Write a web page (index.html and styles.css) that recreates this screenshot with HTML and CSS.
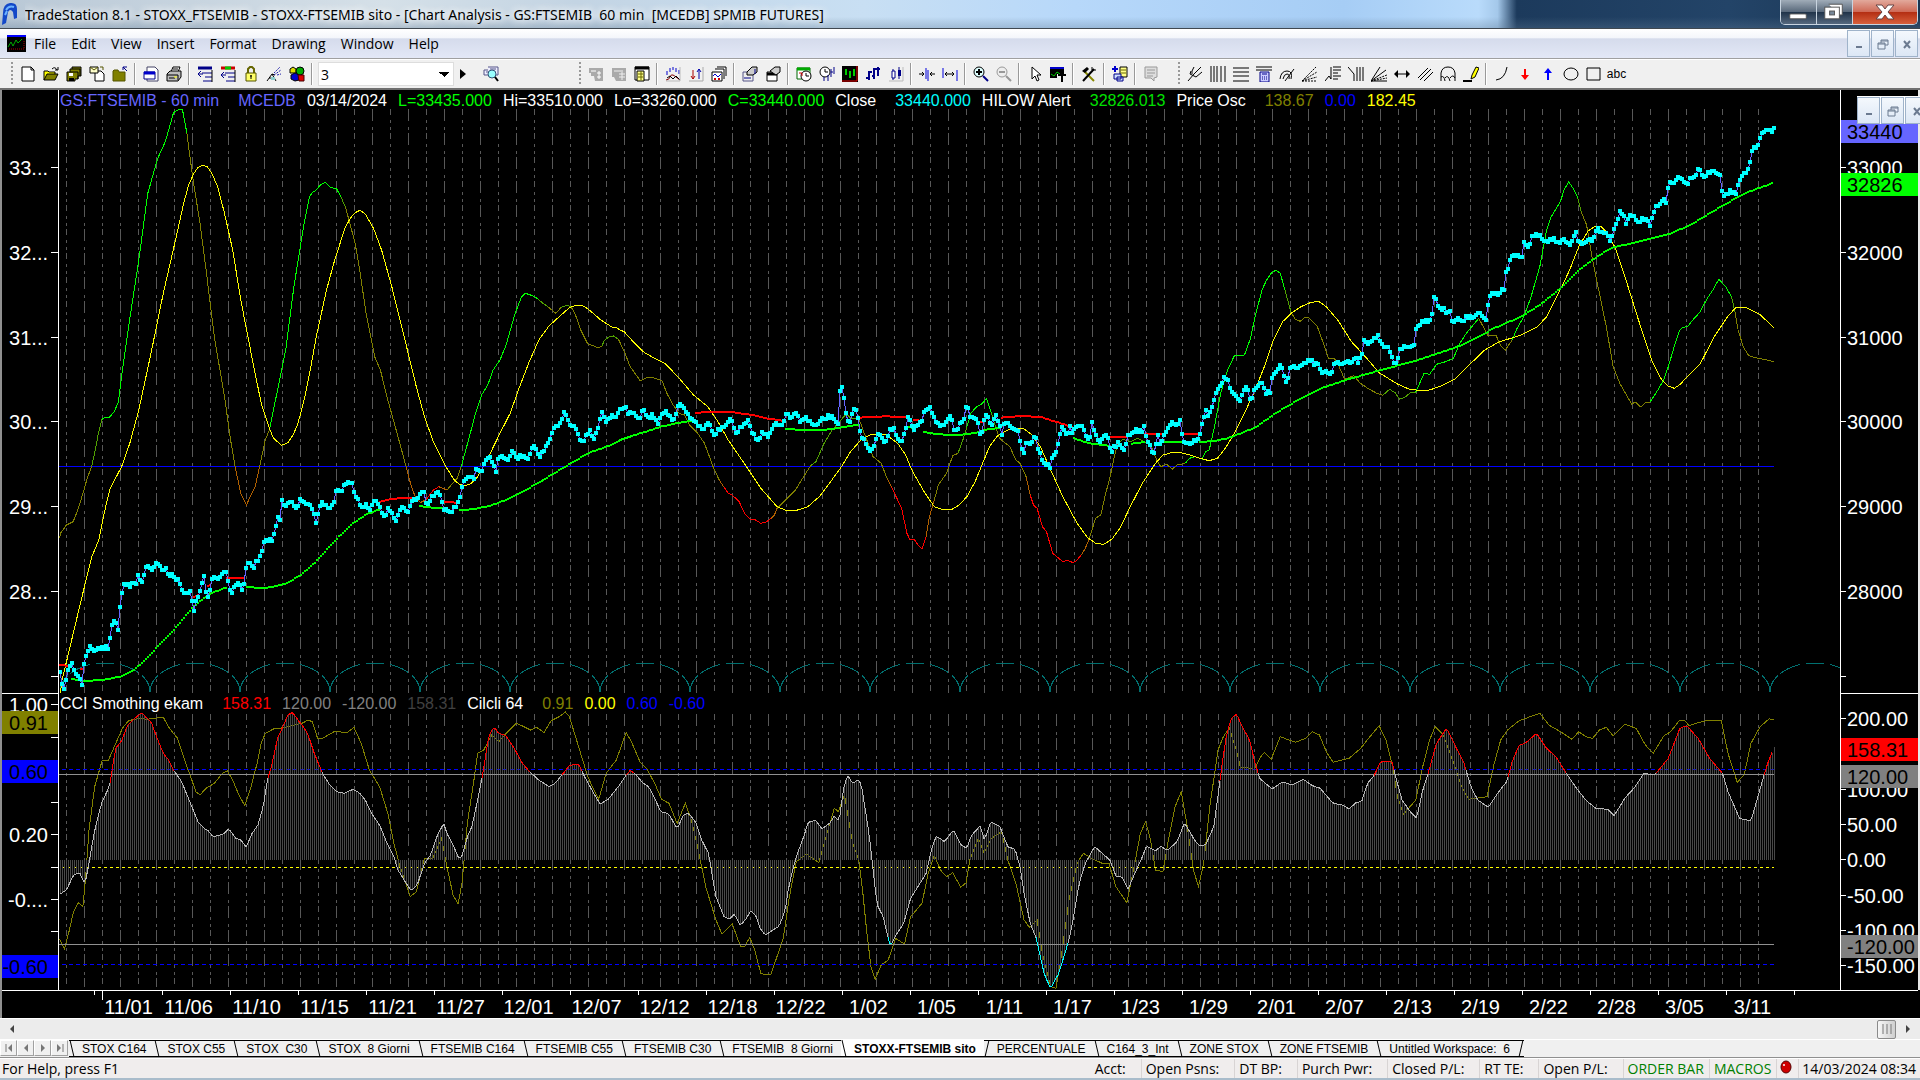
FILE: index.html
```html
<!DOCTYPE html>
<html lang="en">
<head>
<meta charset="utf-8">
<title>TradeStation 8.1</title>
<link rel="stylesheet" href="styles.css">
</head>
<body>
<header class="titlebar">
  <svg class="logo" viewBox="0 0 18 24"><path d="M2 23L3 11Q3 2 10 1Q17 0 17 7L17 16L14 17L13 10Q10 6 8 10L6 21z" fill="#1348c8"/><path d="M6 8Q9 3 14 5M5 13L7 9" stroke="#6db4ff" stroke-width="2" fill="none"/></svg>
  <h1 class="title">TradeStation 8.1 - STOXX_FTSEMIB - STOXX-FTSEMIB sito - [Chart Analysis - GS:FTSEMIB&nbsp; 60 min&nbsp; [MCEDB] SPMIB FUTURES]</h1>
  <div class="winbuttons">
    <button class="win" aria-label="Minimize"><svg viewBox="0 0 36 24"><rect x="9" y="14" width="17" height="5" rx="1" fill="#fff" stroke="#555"/></svg></button>
    <button class="win" aria-label="Restore"><svg viewBox="0 0 36 24"><path d="M12 4h14v11h-3" fill="#fff" stroke="#555"/><rect x="8" y="7" width="15" height="12" fill="#fff" stroke="#555"/><rect x="13" y="11" width="5" height="4" fill="#789" stroke="#555"/></svg></button>
    <button class="win win-close" aria-label="Close"><svg viewBox="0 0 64 24"><path d="M23 5h6l3 4 3-4h6l-6 7 6 7h-6l-3-4-3 4h-6l6-7z" fill="#fff" stroke="#644"/></svg></button>
  </div>
</header>
<nav class="menubar">
  <svg class="menuicon" viewBox="0 0 19 17"><rect width="19" height="17" fill="#000"/><path d="M0 1h19" stroke="#00f" stroke-width="2"/><path d="M1 12l3-5 2 4 3-6 2 3 4-4" stroke="#0a0" fill="none"/><path d="M2 14h15V5" stroke="#a00" fill="none" stroke-dasharray="1 1"/></svg>
  <a href="#">File</a><a href="#">Edit</a><a href="#">View</a><a href="#">Insert</a><a href="#">Format</a><a href="#">Drawing</a><a href="#">Window</a><a href="#">Help</a>
  <div class="mdi">
    <button aria-label="Minimize chart"><svg viewBox="0 0 16 16"><path d="M5 11h6" stroke="#6b7a90" stroke-width="2"/></svg></button>
    <button aria-label="Restore chart"><svg viewBox="0 0 16 16"><path d="M6 7V4h7v5h-3M6 5h7M3 7h7v6H3zM3 8h7" stroke="#6b7a90" fill="none"/></svg></button>
    <button aria-label="Close chart"><svg viewBox="0 0 16 16"><path d="M5 5l6 7M11 5l-6 7" stroke="#6b7a90" stroke-width="2"/></svg></button>
  </div>
</nav>
<div class="toolbar">
  <div class="group">
    <i class="grip"></i>
    <button aria-label="New"><svg viewBox="0 0 16 16"><path d="M2 1h9l3 3v11H2zM11 1v3h3" fill="#fff" stroke="#000"/></svg></button>
    <button aria-label="Open"><svg viewBox="0 0 16 16"><path d="M1 14V5h4l1 1h6v2" fill="#ff0" stroke="#000"/><path d="M1 14l3-6h11l-3 6z" fill="#808000" stroke="#000"/><path d="M9 3q3-3 5 1M12 4h3V1" fill="none" stroke="#000"/></svg></button>
    <button aria-label="Save all"><svg viewBox="0 0 16 16"><path d="M6 1h9v9h-3v3H9v2H1V6h3V3h2z" fill="#808000" stroke="#000"/><path d="M4 6h8v7M6 3h8v7" fill="none" stroke="#000"/><path d="M3 7h4v3H3z" fill="#fff"/><path d="M3 12h5v3H3z" fill="#000"/></svg></button>
    <button aria-label="New from mail"><svg viewBox="0 0 16 16"><path d="M6 5h6l3 3v7H6z" fill="#fff" stroke="#000"/><path d="M1 1h8v6H1z" fill="#ffc" stroke="#000"/><path d="M1 1l4 3 4-3M11 1h3v3" fill="none" stroke="#550"/></svg></button>
    <button aria-label="Close workspace"><svg viewBox="0 0 16 16"><path d="M1 15V5l1-1h4l1 2h6v9z" fill="#808000" stroke="#550"/><path d="M11 1h4M11 1v3M11 1l4 4" stroke="#008" fill="none"/></svg></button>
    <i class="sep"></i>
    <button aria-label="New window"><svg viewBox="0 0 16 16"><path d="M4 1h8l3 3v11H4z" fill="#fff" stroke="#446"/><path d="M1 6h11v7H1z" fill="#fff" stroke="#008"/><path d="M1 7h11" stroke="#00c" stroke-width="3"/></svg></button>
    <button aria-label="Print"><svg viewBox="0 0 16 16"><path d="M5 6l2-5h7l-2 5" fill="#fff" stroke="#000"/><path d="M1 8l3-3h11v6l-3 4H1z" fill="#bbb" stroke="#000"/><path d="M1 9h11v5M3 12h6M7 3h5" stroke="#000" fill="none"/><path d="M8 11h3" stroke="#ff0"/></svg></button>
    <i class="sep"></i>
    <button aria-label="Format symbol"><svg viewBox="0 0 16 16"><path d="M1 2h14" stroke="#008" stroke-width="3"/><path d="M5 7h10M8 11h7M6 15h9M1 8h5M1 8l3-3M1 8l3 3" stroke="#008" fill="none"/><path d="M15 4v12" stroke="#000"/></svg></button>
    <button aria-label="Format studies"><svg viewBox="0 0 16 16"><path d="M1 2h14" stroke="#c00" stroke-width="3"/><path d="M5 2h6" stroke="#0c0" stroke-width="3"/><path d="M5 7h10M8 11h7M6 15h9M1 9h5M1 9l3-3M1 9l3 3" stroke="#008" fill="none"/><path d="M15 4v12" stroke="#000"/></svg></button>
    <button aria-label="Lock"><svg viewBox="0 0 16 16"><path d="M5 7V3l2-2h2l2 2v4" fill="none" stroke="#660" stroke-width="2"/><path d="M3 7h10v8H3z" fill="#ff6" stroke="#550"/><path d="M8 9v4M7 10h2" stroke="#000"/></svg></button>
    <button aria-label="Data feed"><svg viewBox="0 0 16 16"><path d="M1 15l5-7 4 7M3 12h6M6 8l3 1" stroke="#000" fill="none"/><path d="M8 7l6-6M8 9l7-5M11 9l4-1" stroke="#22a" stroke-dasharray="2 1"/><path d="M5 11h4v3H5z" fill="#8cc"/></svg></button>
    <button aria-label="Shapes"><svg viewBox="0 0 16 16"><path d="M1 3l3-2 3 2v4H1z" fill="#dd0" stroke="#000"/><circle cx="11" cy="5" r="4" fill="#0a0" stroke="#000"/><path d="M2 9l4-2 4 2v5l-4 1-4-2z" fill="#00c" stroke="#000"/><path d="M9 9h6v6h-5z" fill="#d00" stroke="#400"/></svg></button>
    <i class="sep"></i>
    <select class="symbol" aria-label="Interval"><option>3</option></select>
    <button class="narrow" aria-label="Go"><svg viewBox="0 0 16 16"><path d="M5 3l6 5-6 5z" fill="#000"/></svg></button>
    <button aria-label="Symbol lookup"><svg viewBox="0 0 16 16"><path d="M5 1h10v8H1V4h4M3 6h3M7 3h6" stroke="#558" fill="#eef"/><circle cx="9" cy="8" r="4" fill="#9ff" stroke="#357"/><path d="M12 11l3 4" stroke="#000" stroke-width="2"/></svg></button>
  </div>
  <div class="group group-charting">
    <i class="grip"></i>
    <button aria-label="Insert account"><svg viewBox="0 0 16 16"><path d="M1 2h14v13H7l-1-5H3V7H1z" fill="#aaa"/><path d="M3 5h5M11 5v8M9 7h4M9 11h4" stroke="#fff"/></svg></button>
    <button aria-label="Insert order"><svg viewBox="0 0 16 16"><path d="M1 2h14v13H5l-2-4H1z" fill="#aaa"/><path d="M3 5h9M8 8h6M8 11h6M11 6v8" stroke="#eee"/></svg></button>
    <button aria-label="Data window"><svg viewBox="0 0 16 16"><path d="M1 1h14v13H1z" fill="#fff" stroke="#000"/><path d="M1 2h14" stroke="#000" stroke-width="3"/><path d="M3 5h7v10H3z" fill="#ff8" stroke="#000"/><path d="M4 8h5M4 11h5M7 5v9" stroke="#660"/></svg></button>
    <i class="sep"></i>
    <button aria-label="Insert analysis"><svg viewBox="0 0 16 16"><path d="M1 14q3 0 4-3t3-2 3 2 4 3" fill="none" stroke="#800"/><path d="M2 12l3-2 3 3 3-3 4 4" fill="none" stroke="#000"/><path d="M2 5v4M5 2v4M8 1v3M11 2v4M14 4v4" stroke="#00c"/><path d="M1 15h14V1" stroke="#bbb" fill="none"/></svg></button>
    <button aria-label="Insert strategy"><svg viewBox="0 0 16 16"><path d="M5 4v9M3 10l2 3 2-3" stroke="#a00" fill="none"/><path d="M11 13V3M9 6l2-3 2 3" stroke="#00a" fill="none"/><path d="M1 15h14V1" stroke="#aaa" fill="none"/></svg></button>
    <button aria-label="Templates"><svg viewBox="0 0 16 16"><path d="M6 1h9v9M4 3h9v10M1 6h10v9H1z" fill="#fff" stroke="#000"/><path d="M2 10l2-2 3 3 3-3" stroke="#00c" fill="none"/><path d="M3 13h2M7 13h2" stroke="#c00" stroke-width="2"/></svg></button>
    <i class="sep"></i>
    <button aria-label="Format analysis"><svg viewBox="0 0 16 16"><path d="M1 6h10v9H1z" fill="#eee" stroke="#558"/><path d="M5 6l5-5h5v5l-4 3H5z" fill="#ccc" stroke="#000"/><path d="M2 12h7M13 3v5" stroke="#008"/></svg></button>
    <button aria-label="Format window"><svg viewBox="0 0 16 16"><path d="M2 6h10v9H2z" fill="#fff" stroke="#000"/><path d="M2 8h10" stroke="#000" stroke-width="3"/><path d="M5 5l5-4h5v5l-4 3z" fill="#ccc" stroke="#000"/></svg></button>
    <i class="sep"></i>
    <button aria-label="Session time"><svg viewBox="0 0 16 16"><path d="M1 2h13v11H1z" fill="#fff" stroke="#060"/><path d="M1 3h13" stroke="#0a0" stroke-width="3"/><circle cx="10" cy="10" r="5" fill="#fff" stroke="#000"/><path d="M10 7v3h3" stroke="#000" fill="none"/><path d="M3 7h3v3" stroke="#c00" fill="none"/></svg></button>
    <button aria-label="Bar interval"><svg viewBox="0 0 16 16"><circle cx="6" cy="6" r="5" fill="#fff" stroke="#000"/><path d="M6 3v3h3" stroke="#000" fill="none"/><path d="M5 11v4M9 9v6M12 3v8M15 1v7M12 6h2" stroke="#008"/></svg></button>
    <button aria-label="Chart colors"><svg viewBox="0 0 16 16"><path d="M0 0h16v16H0z" fill="#000"/><path d="M4 3v6M8 5v7M12 3v7" stroke="#0c0" stroke-width="2"/><path d="M0 15h15V0" stroke="#e00" fill="none"/></svg></button>
    <button aria-label="Bars"><svg viewBox="0 0 16 16"><path d="M4 5v9M9 2v11M13 1v9M1 12h3M4 6h3M7 10h2M10 3h3M13 3h2" stroke="#008" stroke-width="2"/></svg></button>
    <button aria-label="Candles"><svg viewBox="0 0 16 16"><path d="M5 3v11M11 1v12" stroke="#008"/><path d="M4 5h3v7H4z" fill="#fff" stroke="#008"/><path d="M10 4h3v6h-3z" fill="#008"/><path d="M1 15h14V1" stroke="#bbb" fill="none"/></svg></button>
    <i class="sep"></i>
    <button aria-label="Narrow bars"><svg viewBox="0 0 16 16"><path d="M0 8h5M3 6l2 2-2 2M16 8h-4M13 6l-2 2 2 2" stroke="#000" fill="none"/><path d="M7 2v11M9 4v11" stroke="#00d"/></svg></button>
    <button aria-label="Widen bars"><svg viewBox="0 0 16 16"><path d="M3 8h9M5 6L3 8l2 2M10 6l2 2-2 2" stroke="#000" fill="none"/><path d="M1 2v10M15 4v11" stroke="#00d"/></svg></button>
    <i class="sep"></i>
    <button aria-label="Zoom in"><svg viewBox="0 0 16 16"><circle cx="6" cy="6" r="5" fill="#dff" stroke="#000"/><path d="M3 6h6M6 3v6" stroke="#000" stroke-width="2"/><path d="M10 10l5 5" stroke="#008" stroke-width="2"/></svg></button>
    <button aria-label="Zoom out"><svg viewBox="0 0 16 16"><circle cx="6" cy="6" r="5" fill="#eee" stroke="#999"/><path d="M3 6h6M10 10l5 5" stroke="#999" stroke-width="2"/></svg></button>
    <i class="sep"></i>
    <button aria-label="Pointer"><svg viewBox="0 0 16 16"><path d="M5 1v12l3-3 2 5 2-1-2-5h4z" fill="#fff" stroke="#000"/></svg></button>
    <button aria-label="Hint"><svg viewBox="0 0 16 16"><path d="M0 1h14v11H0z" fill="#000"/><path d="M0 2h14" stroke="#00c" stroke-width="2"/><path d="M1 8l3 2 3-4 3 2" stroke="#0c0" fill="none"/><path d="M7 8h9v8H7z" fill="#f0f0f0"/><path d="M8 9h8M12 9v7" stroke="#000" stroke-width="2"/></svg></button>
    <i class="sep"></i>
    <button aria-label="Tools"><svg viewBox="0 0 16 16"><path d="M3 5l10 10" stroke="#880" stroke-width="2"/><path d="M1 5l5-4 2 2-4 4z" fill="#000"/><path d="M2 15L13 3" stroke="#000" stroke-width="2"/><path d="M11 1v3h4" stroke="#000" fill="none"/></svg></button>
    <i class="sep"></i>
    <button aria-label="Add indicator"><svg viewBox="0 0 16 16"><path d="M3 0v6M0 3h6" stroke="#00c" stroke-width="2"/><path d="M8 1h7v10H8z" fill="#ff8" stroke="#000"/><path d="M9 4h5M9 7h5" stroke="#660"/><path d="M2 8h7v5H2zM5 11h6v4H5z" fill="#cdf" stroke="#008"/></svg></button>
    <i class="sep"></i>
    <button aria-label="Comments"><svg viewBox="0 0 16 16"><path d="M2 1h12v10l-3 1v3l-3-3H2z" fill="#ddd" stroke="#999"/><path d="M4 4h8M4 7h8M4 10h6" stroke="#999"/></svg></button>
  </div>
  <div class="group group-drawing">
    <i class="grip"></i>
    <button aria-label="Pitchfork"><svg viewBox="0 0 16 16"><path d="M1 15l6-7M4 5l-1 3 6 3 6-5M7 1L5 5v3M14 1L7 8" stroke="#000" fill="none"/></svg></button>
    <button aria-label="Time lines"><svg viewBox="0 0 16 16"><path d="M1 0v16M4 0v16M7 0v16M11 0v16M15 0v16" stroke="#000"/></svg></button>
    <button aria-label="Horizontal lines"><svg viewBox="0 0 16 16"><path d="M0 2h16M0 6h16M0 10h16M0 15h16" stroke="#000"/></svg></button>
    <button aria-label="Calculator"><svg viewBox="0 0 16 16"><path d="M0 1h16M0 4h16" stroke="#000"/><path d="M4 6h9v10H4z" fill="#ccf" stroke="#008"/><path d="M6 8h5M6 11h1M8 11h1M10 11h1M6 13h1M8 13h1M10 13h1" stroke="#008"/></svg></button>
    <button aria-label="Speed arcs"><svg viewBox="0 0 16 16"><path d="M1 13q1-8 7-8t4 8M4 13q1-5 4-5t2 5M6 15L15 3" stroke="#000" fill="none"/></svg></button>
    <button aria-label="Fan lines"><svg viewBox="0 0 16 16"><path d="M0 15L14 1M0 15L15 6M0 15l15-4M0 15h15" stroke="#000" stroke-dasharray="2 1"/></svg></button>
    <button aria-label="Retracement"><svg viewBox="0 0 16 16"><path d="M0 15l4-5 2 3V1M8 1h8M8 4h8M8 7h5M8 10h8M8 13h5" stroke="#000" fill="none"/></svg></button>
    <button aria-label="Extension"><svg viewBox="0 0 16 16"><path d="M0 1l6 7v7M9 1v14M12 1v14M15 1v14" stroke="#000" fill="none"/></svg></button>
    <button aria-label="Gann fan"><svg viewBox="0 0 16 16"><path d="M0 15L9 1M0 15L15 4M0 15h16" stroke="#000"/><path d="M0 15l16-6M0 15l16-3" stroke="#000" stroke-dasharray="2 1"/></svg></button>
    <button aria-label="Horizontal arrow"><svg viewBox="0 0 16 16"><path d="M1 8h14" stroke="#000"/><path d="M0 8l4-4v8zM16 8l-4-4v8z" fill="#000"/></svg></button>
    <button aria-label="Parallel lines"><svg viewBox="0 0 16 16"><path d="M1 12L11 2M3 14L14 3M7 15l9-9" stroke="#000"/></svg></button>
    <button aria-label="Cycles"><svg viewBox="0 0 16 16"><path d="M1 15V7q1-6 7-6t7 6v8M1 11q3-2 4 4M5 12q3-4 5 3M10 12q3-4 5 0" stroke="#000" fill="none"/></svg></button>
    <button aria-label="Pencil"><svg viewBox="0 0 16 16"><path d="M0 15h9" stroke="#000" stroke-width="2"/><path d="M8 13l1-4 4-8 3 1-4 9z" fill="#ff0" stroke="#000"/></svg></button>
    <i class="sep"></i>
    <button aria-label="Arc"><svg viewBox="0 0 16 16"><path d="M2 14q9-1 11-13" stroke="#000" fill="none"/></svg></button>
    <button aria-label="Down marker"><svg viewBox="0 0 16 16"><path d="M7 3h2v6h3l-4 5-4-5h3z" fill="#f00"/></svg></button>
    <button aria-label="Up marker"><svg viewBox="0 0 16 16"><path d="M7 14h2V7h3L8 2 4 7h3z" fill="#00f"/></svg></button>
    <button aria-label="Ellipse"><svg viewBox="0 0 16 16"><ellipse cx="8" cy="8" rx="7" ry="6" fill="none" stroke="#000"/></svg></button>
    <button aria-label="Rectangle"><svg viewBox="0 0 16 16"><path d="M1 2h13v12H1z" fill="none" stroke="#000"/></svg></button>
    <button class="abc">abc</button>
  </div>
</div>
<main class="chart">
  <svg class="axis" id="left"></svg>
  <div class="plotarea">
    <svg class="plot" id="plot" viewBox="59 90 1781 900" preserveAspectRatio="none"></svg>
    <p class="legend"><span class="violet">GS:FTSEMIB - 60 min</span><span class="violet pad">MCEDB</span><span>03/14/2024</span><span class="green">L=33435.000</span><span>Hi=33510.000</span><span>Lo=33260.000</span><span class="green">C=33440.000</span><span>Close</span><span class="cyan pad">33440.000</span><span>HILOW Alert</span><span class="green2 pad">32826.013</span><span>Price Osc</span><span class="olive pad">138.67</span><span class="blue">0.00</span><span class="yellow">182.45</span></p>
    <p class="legend legend-cci"><span>CCI Smothing ekam</span><span class="red pad">158.31</span><span class="gray">120.00</span><span class="gray">-120.00</span><span class="dim">158.31</span><span>Cilcli 64</span><span class="olive pad">0.91</span><span class="yellow">0.00</span><span class="blue">0.60</span><span class="blue">-0.60</span></p>
  </div>
  <svg class="axis" id="right"></svg>
  <svg class="dates" id="dates"></svg>
  <div class="mdi mdi-float">
    <button aria-label="Minimize window"><svg viewBox="0 0 16 16"><path d="M5 11h6" stroke="#6b7a90" stroke-width="2"/></svg></button>
    <button aria-label="Restore window"><svg viewBox="0 0 16 16"><path d="M6 7V4h7v5h-3M6 5h7M3 7h7v6H3zM3 8h7" stroke="#6b7a90" fill="none"/></svg></button>
    <button aria-label="Close window"><svg viewBox="0 0 16 16"><path d="M5 5l6 7M11 5l-6 7" stroke="#6b7a90" stroke-width="2"/></svg></button>
  </div>
</main>
<div class="scroll">
  <button aria-label="Scroll left"><svg viewBox="0 0 8 10"><path d="M6 1v8L2 5z" fill="#444"/></svg></button>
  <button class="thumb" aria-label="Scroll position"><svg viewBox="0 0 12 12"><path d="M2 1v10M6 1v10M10 1v10" stroke="#777"/></svg></button>
  <button aria-label="Scroll right"><svg viewBox="0 0 8 10"><path d="M2 1v8l4-4z" fill="#444"/></svg></button>
</div>
<nav class="tabs" id="tabs">
  <button class="step" aria-label="First"><svg viewBox="0 0 10 10"><path d="M2 1v8" stroke="#777"/><path d="M8 1v8L4 5z" fill="#777"/></svg></button>
  <button class="step" aria-label="Previous"><svg viewBox="0 0 10 10"><path d="M7 1v8L3 5z" fill="#777"/></svg></button>
  <button class="step" aria-label="Next"><svg viewBox="0 0 10 10"><path d="M3 1v8l4-4z" fill="#777"/></svg></button>
  <button class="step" aria-label="Last"><svg viewBox="0 0 10 10"><path d="M8 1v8" stroke="#777"/><path d="M2 1v8l4-4z" fill="#777"/></svg></button>
  <button class="tab">STOX C164</button><button class="tab">STOX C55</button><button class="tab">STOX&nbsp; C30</button><button class="tab">STOX&nbsp; 8 Giorni</button><button class="tab">FTSEMIB C164</button><button class="tab">FTSEMIB C55</button><button class="tab">FTSEMIB C30</button><button class="tab">FTSEMIB&nbsp; 8 Giorni</button><button class="tab active">STOXX-FTSEMIB sito</button><button class="tab after">PERCENTUALE</button><button class="tab">C164_3_Int</button><button class="tab">ZONE STOX</button><button class="tab">ZONE FTSEMIB</button><button class="tab last">Untitled Workspace:&nbsp; 6</button>
</nav>
<footer class="status">
  <span class="help">For Help, press F1</span>
  <span class="cell">Acct:</span><span class="cell">Open Psns:</span><span class="cell">DT BP:</span><span class="cell">Purch Pwr:</span><span class="cell">Closed P/L:</span><span class="cell">RT TE:</span><span class="cell">Open P/L:</span><span class="cell ok">ORDER BAR</span><span class="cell ok">MACROS</span>
  <svg class="ball" viewBox="0 0 12 14"><ellipse cx="6" cy="7" rx="5" ry="6" fill="#d00000" stroke="#500"/><circle cx="4" cy="5" r="1" fill="#fff"/></svg>
  <span class="clock">14/03/2024 08:34</span>
</footer>
<div class="edge"></div>
<script src="script.js"></script>
</body>
</html>
```
FILE: styles.css
```css
* { box-sizing: border-box; }
body {
  margin: 0;
  height: 100vh;
  display: flex;
  flex-direction: column;
  overflow: hidden;
  background: #f0f0f0;
  font-family: "Open Sans", sans-serif;
  font-size: 14px;
  color: #000;
}
button { border: 0; padding: 0; margin: 0; background: none; font: inherit; color: inherit; display: flex; align-items: center; justify-content: center; }
.titlebar {
  flex: none;
  height: 28px;
  display: flex;
  align-items: center;
  background:
    linear-gradient(#ffffff00 60%, #5f7a9455),
    linear-gradient(90deg, #b9c8d6 0, #d5e0e8 20%, #c3d4e3 30%, #c8dff3 45%, #b7d8fa 56%, #a6cdf5 70%, #b9dbfb 77%, #a4c8ea 78%, #1c3a5c 79%, #234468 90%, #1a3450 100%);
}
.logo { width: 18px; height: 24px; }
.title { flex: 1; margin: 0 0 0 7px; padding-top: 2px; font: 14px/26px "Noto Sans", sans-serif; white-space: nowrap; overflow: hidden; text-shadow: 0 0 8px #fff, 0 0 8px #fff; }
.winbuttons { display: flex; align-self: flex-start; margin-right: 2px; border: 1px solid #c8d4e0; border-top: 0; border-radius: 0 0 5px 5px; overflow: hidden; }
.win { width: 36px; height: 24px; background: linear-gradient(#a0acb8, #5a6a7c 48%, #1f3248 50%, #55687e); border-right: 1px solid #c8d4e0; }
.win svg { width: 100%; height: 24px; }
.win-close { width: 64px; border: 0; background: linear-gradient(#e2a99c, #cf6b58 48%, #b32d12 50%, #d8603c); }
.menubar {
  flex: none;
  height: 31px;
  display: flex;
  align-items: center;
  border-top: 1px solid #404850;
  border-bottom: 1px solid #a0a0a0;
  background: linear-gradient(#ffffff, #f4f6fb 30%, #d5dbec 34%, #e3e8f6);
}
.menubar a { color: #000; text-decoration: none; margin-right: 15px; }
.menuicon { width: 19px; height: 17px; margin: 0 8px 0 7px; }
.mdi { display: flex; gap: 1px; margin-left: auto; margin-right: 2px; }
.mdi button { width: 23px; height: 27px; border: 1px solid #9fb3ca; background: linear-gradient(#f4f8fd, #dce7f5); }
.mdi svg { width: 16px; height: 16px; }
.toolbar { flex: none; height: 31px; display: flex; align-items: center; background: #f0f0f0; border-top: 1px solid #fff; border-bottom: 2px solid #707070; }
.group { display: flex; align-items: center; margin-left: 11px; }
.group-charting { margin-left: 77px; }
.group-drawing { margin-left: 16px; }
.group button { width: 23px; height: 24px; }
.group svg { width: 16px; height: 16px; }
.group .narrow { width: 17px; margin-right: 8px; }
.group .abc { font: 12px "Liberation Sans", sans-serif; }
.grip { width: 2px; height: 24px; margin-right: 3px; background: repeating-linear-gradient(#999 0 2px, #f0f0f0 2px 4px); }
.sep { width: 8px; height: 22px; background: linear-gradient(90deg, transparent 3px, #999 3px 4px, #fff 4px 5px, transparent 5px); }
.symbol {
  width: 136px;
  height: 24px;
  margin-left: 2px;
  padding: 0 2px;
  border: 1px solid #ddd;
  appearance: none;
  font: 14px "Open Sans", sans-serif;
  background: #fff conic-gradient(from -45deg at 50% 100%, #000 90deg, #fff 0) right 4px center / 10px 5px no-repeat;
}
.chart {
  flex: 1;
  min-height: 0;
  position: relative;
  display: grid;
  grid-template: minmax(0, 1fr) 28px / 59px minmax(0, 1fr) 80px;
  background: #000;
  overflow: hidden;
}
.axis { width: 100%; height: 100%; }
.plotarea { position: relative; min-height: 0; }
.plot { position: absolute; width: 100%; height: 100%; }
.dates { grid-column: 1 / 4; width: 100%; height: 28px; }
.chart text { font: 20px "Liberation Sans", sans-serif; fill: #fff; }
.chart text.onbox { fill: #000; }
.legend { position: absolute; top: 0; left: 1px; margin: 0; display: flex; gap: 11px; height: 21px; font: 16px/21px "Liberation Sans", sans-serif; color: #fff; white-space: nowrap; }
.legend-cci { top: 67%; }
.pad { margin-left: 8px; }
.violet { color: #6666ff; }
.green { color: #00ff00; }
.green2 { color: #00e000; }
.cyan { color: #00ffff; }
.olive { color: #808000; }
.blue { color: #0000ff; }
.yellow { color: #ffff00; }
.red { color: #ff0000; }
.gray { color: #808080; }
.dim { color: #404040; }
.mdi-float { position: absolute; top: 6px; left: calc(100% - 63px); border-top: 1px solid #fff; background: #fff; }
.scroll { flex: none; height: 22px; display: flex; align-items: center; background: #ececec; border-top: 1px solid #fff; border-bottom: 1px solid #fff; }
.scroll button { width: 24px; height: 19px; }
.scroll svg { width: 8px; height: 10px; }
.scroll .thumb { width: 19px; margin-left: auto; border: 1px solid #8a8a8a; border-radius: 2px; background: linear-gradient(90deg, #f6f6f6, #cfcfcf); }
.scroll .thumb svg { width: 12px; height: 12px; }
.tabs { flex: none; height: 18px; display: flex; background: #f0f0f0; border-bottom: 1px solid #909090; font: 12px/16px "Liberation Sans", sans-serif; }
.step { width: 17px; height: 16px; border: 1px solid #a0a0a0; border-left-color: #fff; border-top-color: #fff; }
.step svg { width: 10px; height: 10px; }
.tab { height: 17px; padding: 0 8px 0 0; border: solid #000; border-width: 1px 0; background: #f0f0f0; white-space: nowrap; }
.tab svg { width: 6px; height: 17px; margin-right: 7px; flex: none; }
.step + .tab { margin-left: 1px; }
.tab.active { background: #fff; border-top-color: #fff; font-weight: bold; }
.tab.last { padding-right: 0; }
.tab.last svg:last-child { margin: 0 0 0 8px; }
.status { flex: none; height: 20px; display: flex; align-items: center; background: #f0eded; border-top: 1px solid #fff; font: 14px/20px "Open Sans", sans-serif; white-space: nowrap; }
.help { flex: 1; padding-left: 2px; }
.cell { padding: 0 15px 0 4px; border-right: 1px solid #d8d4d4; }
.cell.ok { color: #008000; padding-right: 5px; }
.ball { width: 12px; height: 14px; margin: 0 6px 4px 3px; }
.clock { padding-right: 4px; border-left: 1px solid #d8d4d4; padding-left: 3px; }
.edge { flex: none; height: 2px; background: #a9bccb; }
```
FILE: script.js
```js
const NS = 'http://www.w3.org/2000/svg';
const GREEN = '#00ff00', MID = '#50a000', OLIVE = '#808000', BROWN = '#b06000', RED = '#ff0000';

function add(parent, name, attrs, text) {
  const el = document.createElementNS(NS, name);
  for (const k in attrs) el.setAttribute(k, attrs[k]);
  if (text !== undefined) el.textContent = text;
  parent.appendChild(el);
  return el;
}

// Recorded series are stored in blocks, each with its own origin and units per pixel.
const BLOCKS = {
  A: [0, 90, 2.45], B: [0, 480, 2.45], C: [620, 280, 2.45],
  D: [620, 640, 2.45], E: [1200, 90, 2.178], F: [1200, 640, 2.178]
};
function pts(block, s) {
  const [ox, oy, k] = BLOCKS[block];
  return s.trim().split(/\s+/).map(p => {
    const [x, y] = p.split(',').map(Number);
    return [ox + x / k, oy + y / 3];
  });
}
const join = list => list.flatMap(([b, s]) => pts(b, s));

const price = join([
['B', '146,565 150,610 157,625 165,575 170,562 178,555 184,575 190,575 195,600 202,618 207,535 213,520 220,497 226,512 232,522 237,498 246,500 252,512 258,500 266,505 270,465 275,430 281,425 290,450 295,355 301,322 310,313 318,320 325,300 332,320 338,290 347,305 353,278 362,258 370,272 383,247 390,262 398,268 408,258 412,290 425,285 430,295 437,298 447,340 458,330 465,335 471,365 475,397 480,360 488,340 500,292 504,330 510,345 517,310 525,288 530,300 540,285 552,278 558,290 560,320 570,335 580,312 588,312 594,330 600,300 603,262 613,245 622,258 635,238 641,215 648,175 658,187 668,178 672,150 680,115 687,120 690,60 698,78 708,65 718,75 728,78 737,58 745,68 757,68 766,95 775,130 782,72 792,72 803,82 812,78 820,65 825,25 840,28 845,15 855,8 862,2 868,42 875,60 885,75 895,75 908,95 913,60 922,62 930,85 942,105 952,88 962,105 970,122 978,95 990,82 1002,92 1010,62 1020,58 1028,42 1038,38 1045,72 1055,55 1065,48 1075,28 1082,60 1088,95 1100,90 1115,88 1122,68 1128,45 1133,10'],
['A', '1134,1175 1143,1170 1155,1155 1162,1160 1168,1135 1178,1150 1187,1115 1197,1105 1208,1115 1215,1140 1222,1103 1235,1100 1245,1110 1258,1083 1268,1100 1285,1100 1295,1103 1305,1073 1313,1075 1325,1098 1335,1080 1345,1050 1355,1020 1365,1010 1375,985 1385,968 1393,1000 1408,1010 1418,1045 1428,1048 1438,1040 1445,1022 1455,1045 1467,1010 1475,962 1487,995 1500,978 1510,978 1520,958 1526,965 1532,938 1540,972 1550,968'],
['C', '5,395 12,368 20,403 35,403 50,415 55,392 65,405 80,410 93,430 100,402 115,400 123,403 132,425 145,368 155,380 165,408 180,412 187,435 205,445 215,430 230,460 245,450 255,438 270,418 285,455 300,440 315,415 322,460 335,477 350,460 363,467 375,440 390,430 402,430 408,395 415,413 430,400 440,423 450,410 463,425 475,433 488,435 495,410 515,413 522,408 535,435 540,310 548,345 555,405 563,435 570,392 578,387 585,418 590,475 600,485 608,500 617,515 625,490 632,458 640,465 645,488 652,490 662,438 672,450 680,480 690,482 700,450 707,408 715,430 722,450 735,428 740,420 745,392 760,387 770,405 778,435 790,438 800,420 810,408 818,448 830,440 845,415 849,358 857,410 868,420 875,408 885,478 893,410 902,408 910,440 920,410 930,425 935,463 943,428 955,435 965,448 975,458 983,495 990,512 997,485 1005,495 1017,460 1025,515 1035,540 1045,550 1053,567 1060,530 1070,508 1078,465 1085,440 1095,460 1102,443 1108,460 1118,435 1130,437 1138,460 1150,475 1157,428 1163,460 1175,485 1185,470 1197,470 1202,512 1215,500 1222,485 1230,500 1236,512 1245,470 1258,448 1268,455 1280,452 1285,430 1290,480 1300,505 1307,520 1317,465 1325,500 1333,460 1345,440 1355,430 1373,425 1380,490 1390,485 1400,495 1412,480 1418,465'],
['E', '0,1025 5,1005 12,960 18,975 28,945 40,890 50,868 60,868 67,900 75,912 85,938 95,895 105,900 110,940 118,895 130,888 137,870 142,905 152,913 158,855 175,828 188,873 198,830 215,830 228,825 237,800 247,825 258,818 265,850 285,845 295,820 310,820 325,818 337,800 343,820 352,800 356,745 368,768 380,735 388,740 395,765 410,770 417,805 425,820 437,778 450,768 467,772 471,705 485,697 500,690 506,670 510,620 518,645 530,655 538,675 545,660 550,697 565,688 580,685 595,680 605,672 618,678 625,685 628,640 632,615 645,605 650,618 662,597 668,520 672,535 678,500 695,490 700,515 706,460 715,465 725,440 740,432 748,455 755,460 762,440 775,455 782,460 790,442 800,465 805,465 817,425 825,460 840,455 855,450 863,415 873,430 885,425 895,462 903,405 908,390 915,368 922,375 928,400 935,375 950,388 965,390 975,388 980,405 985,380 995,350 1007,325 1015,340 1022,270 1032,280 1045,262 1052,262 1060,290 1068,265 1080,255 1085,240 1095,255 1110,250 1120,240 1133,258 1138,325 1145,305 1158,308 1167,312 1173,275 1183,258 1192,240 1200,200 1207,168 1212,180 1217,155 1222,130 1232,128 1240,112 1248,125 1251,118']]);

const slow = join([
['B', '148,640 152,600 165,535 200,355 225,230'],
['A', '242,1350 255,1270 270,1195 298,1130 318,1060 340,960 370,790 400,610 430,450 450,340 462,285 475,250 485,232 497,226 508,230 520,252 533,290 550,370 570,480 590,630 620,820 640,940 660,1015 670,1045 690,1066 705,1058 718,1035 730,1000 745,930 760,840 775,740 800,600 820,510 845,415 858,385 870,368 882,361 895,372 915,415 935,480 960,590 980,690 1000,790 1020,890 1040,980 1060,1050 1080,1100 1095,1135 1113,1170 1125,1183 1140,1187 1155,1180 1170,1160 1195,1105 1225,1030 1250,970 1270,900 1295,820 1320,750 1345,708 1370,680 1395,653 1410,646 1425,646 1440,656 1470,688 1500,712 1510,713'],
['C', '0,150 10,155 40,195 60,218 85,235 112,252 145,295 180,345 215,380 240,425 265,480 310,560 345,625 385,680 405,690 435,690 460,680 490,648 540,565 565,515 590,480 615,463 630,462 650,463 680,490 700,525 715,570 745,635 770,680 795,690 812,689 830,676 850,650 870,605 890,545 905,500 925,467 950,450 970,444 990,447 1010,465 1030,500 1055,570 1085,650 1120,730 1145,772 1165,790 1185,793 1205,778 1225,745 1250,680 1280,610 1310,553 1330,525 1355,517 1370,517 1400,526 1415,533'],
['E', '0,1105 20,1112 38,1105 55,1075 75,1030 97,970 120,900 140,830 160,750 180,695 200,668 220,650 240,638 258,634 275,650 300,690 330,755 355,792 390,848 430,882 455,897 480,902 500,900 525,888 555,868 590,820 620,780 650,757 665,750 700,735 735,710 755,680 770,640 790,585 805,540 825,470 845,423 858,411 873,409 885,425 905,475 930,580 955,690 985,815 1005,868 1020,888 1033,895 1045,884 1060,862 1090,820 1120,740 1150,678 1167,653 1190,653 1220,674 1250,713']]);

const osc = [
['A', OLIVE, '146,1345 148,1330 163,1305 179,1295 190,1262 205,1203 213,1168 225,1128'],
['A', MID, '236,1065 241,1030 250,988'],
['A', GREEN, '258,982 266,984 280,965 290,935 300,840 320,670 340,510 362,310 383,220 390,195 405,155 412,125 425,68 435,60 447,58 458,130'],
['A', OLIVE, '462,170 473,270 490,400 505,540 525,740 550,920 565,1050 576,1130'],
['A', BROWN, '590,1210 604,1245 612,1222 625,1190 636,1130'],
['A', OLIVE, '650,1050 660,1020'],
['A', GREEN, '675,930 700,780 720,590 745,400 758,320 765,308 775,300 785,285 797,277 810,292 825,297 835,320'],
['A', MID, '846,350'],
['A', OLIVE, '855,390 870,460 880,530 897,670 918,800 932,840 950,930 975,1040 995,1130'],
['A', BROWN, '1008,1190 1018,1222 1030,1238 1045,1228'],
['A', RED, '1062,1200 1075,1190'],
['A', BROWN, '1095,1200'],
['A', OLIVE, '1120,1165 1130,1130'],
['A', GREEN, '1150,1040 1165,970 1180,915 1195,885 1208,840 1225,810 1240,765 1262,670 1278,620 1287,610 1305,617 1318,627'],
['A', MID, '1330,640 1342,650'],
['A', OLIVE, '1362,670 1375,652'],
['A', MID, '1390,646 1400,652'],
['A', OLIVE, '1410,675 1423,720 1440,762 1455,768 1465,773 1475,768'],
['A', MID, '1480,753 1490,742 1503,738 1515,748'],
['C', OLIVE, '10,213 25,260 50,303 65,293 80,293 103,302 115,340 130,375 145,400 158,405 170,435 190,460 207,490 228,560 243,600'],
['C', BROWN, '255,622'],
['C', RED, '265,640 275,645 292,665 305,700 320,718 332,720 345,730 357,727 370,715'],
['C', BROWN, '378,706 385,685'],
['C', OLIVE, '410,655 430,630 455,580 468,556'],
['C', MID, '480,545 500,490 520,450 545,415 555,402 565,415 585,415'],
['C', OLIVE, '600,465 620,530 640,550 655,597'],
['C', BROWN, '665,620'],
['C', RED, '690,685 703,760 710,778 722,780 730,795 740,807 750,770'],
['C', BROWN, '758,710 770,660'],
['C', OLIVE, '780,615 800,580 815,527 828,520'],
['C', MID, '840,480 850,440'],
['C', GREEN, '860,400 872,382 885,373 898,356 910,400'],
['C', MID, '920,440'],
['C', OLIVE, '930,475 955,500 970,540 980,550 995,590'],
['C', BROWN, '1005,645'],
['C', RED, '1013,675 1022,685 1035,740 1045,755 1060,820 1085,845 1097,841 1110,848 1118,842 1130,825'],
['C', BROWN, '1140,805 1150,775'],
['C', OLIVE, '1165,715 1178,705 1190,640 1200,595 1213,520 1220,490'],
['C', MID, '1232,478 1250,485 1268,475 1285,485'],
['C', OLIVE, '1300,495 1315,540 1325,560 1340,553 1353,568 1365,555 1385,550'],
['C', GREEN, '1395,535 1410,530'],
['E', GREEN, '5,1107 12,1085 20,1080 30,1020 45,910 60,840 75,797 97,795 110,745 120,680 135,600 145,570 155,550 165,540 175,550 185,600'],
['E', MID, '198,665'],
['E', OLIVE, '207,687 218,694 228,683 237,684 255,708 270,765 280,805 292,805 300,820 315,868 335,857 348,878 365,895 385,910 398,916'],
['E', MID, '413,898 425,908 435,928 448,920 458,908 470,906'],
['E', GREEN, '480,875 488,850 500,853 515,823 535,815 552,805 565,762 580,730 607,685'],
['E', OLIVE, '628,738 645,736 655,768 665,780 680,750'],
['E', GREEN, '690,717 705,680 720,625 740,530 755,420 765,380 785,335 793,300 803,275 815,300 823,325'],
['E', MID, '830,365'],
['E', OLIVE, '842,405 855,510 870,610 885,710 900,830 915,882 930,918 940,942 948,936 960,951 970,938 980,936'],
['E', GREEN, '995,905 1010,870 1020,830 1035,760 1045,720 1052,712 1062,710 1075,687 1088,668 1105,625 1118,598 1130,568 1145,590 1158,622'],
['E', MID, '1165,665'],
['E', OLIVE, '1172,720 1183,770 1195,797 1215,805 1235,810 1250,815']
];

const support = [
['B', '175,597 205,603 250,600 295,590 330,568 360,535 390,495 415,465 440,430 470,385 490,363 520,338 555,322'],
['B', '603,321 640,324 665,322 700,311 735,287 770,250 800,210 830,170 865,130 895,105 920,92 930,90'],
['B', '1028,78 1060,83 1085,84'],
['B', '1125,90 1160,88 1200,77 1240,60 1280,36 1328,2'],
['A', '1328,1172 1385,1130 1440,1090 1490,1068 1530,1046 1550,1036'],
['C', '0,480 50,460 100,440 150,427 185,420'],
['C', '405,446 440,450 500,450 550,441 585,434'],
['C', '705,440 718,445'],
['C', '743,455 780,463 830,465 870,459 900,448 935,443'],
['C', '1110,474 1150,490 1197,497'],
['C', '1253,491 1285,486'],
['C', '1335,486 1385,486'],
['E', '0,1056 30,1053 60,1045 120,1013 170,965 220,925 270,892 330,865 400,838 470,812 530,785 580,760 640,715 700,680 740,645 790,590 830,535 870,495 900,472 950,457 1000,440 1030,428 1070,403 1110,370 1160,330 1200,303 1250,278']];
const resistance = [
['B', '146,555 170,558'], ['B', '197,566 205,566'], ['B', '475,352 490,342'], ['B', '508,318 518,314'], ['B', '555,294 600,294'],
['A', '930,1235 960,1227 990,1223 1018,1224'], ['A', '1085,1236 1120,1238'],
['C', '185,399 215,396 270,396 320,404 360,415 405,424'], ['C', '585,413 650,409 705,412'], ['C', '718,420 740,422'], ['C', '880,426 890,426'],
['C', '935,413 985,408 1030,411 1070,426 1110,442'], ['C', '1197,470 1245,470'], ['C', '1285,462 1335,462'], ['C', '1380,462 1420,462']];

const cci = join([
['B', '146,1243 163,1230 180,1185 195,1178 208,1212 215,1170 232,1050 250,965 268,920 275,868 283,805 297,785 312,738 330,715 347,698 360,715 370,725 385,775 400,820 412,838 425,870 445,905 465,965 485,1025 500,1045 510,1052 522,1070 548,1062 560,1046 578,1075 590,1080 604,1102 615,1065 632,1035 645,980 655,900 665,860 680,775 695,735 705,705 717,697 730,720 743,740 755,765 770,820 790,880 808,915 825,935 843,940 865,928 880,938 895,960 910,1000 930,1035 945,1080 965,1130 975,1170 990,1200 1007,1232 1022,1215 1040,1150 1055,1125 1070,1070 1087,1030 1095,1060 1110,1095 1125,1138 1133,1125 1145,1070 1155,1045 1165,990 1180,900 1187,850 1195,785 1203,752 1212,742 1220,758 1240,768 1260,805 1280,850 1300,878 1320,900 1345,920 1360,910 1380,880 1395,856 1418,852 1430,885 1450,930 1470,972 1490,958 1515,920'],
['D', '0,433 15,405 25,391 38,402 55,428 70,440 80,462 100,515 120,522 140,567 155,525 168,520 185,545 200,600 217,640 225,700 235,770 255,830 268,838 280,822 295,856 310,835 320,812 332,825 345,870 357,885 375,870 390,858 405,810 412,750 425,680 435,640 450,590 462,545 480,542 495,567 515,548 525,528 537,543 547,450 557,405 570,430 585,418 592,440 605,540 612,600 622,710 630,795 645,830 655,885 663,918 675,888 695,850 712,775 735,730 750,700 765,620 775,588 795,605 817,570 835,615 850,625 860,588 882,558 893,600 908,546 930,558 950,620 968,628 980,680 990,760 1005,850 1020,895 1028,940 1040,1005 1055,1045 1075,1000 1100,900 1110,840 1125,730 1140,670 1163,620 1200,660 1215,708 1230,712 1245,747 1265,690 1280,650 1290,618 1312,633 1325,618 1340,632 1365,605 1383,548 1410,605'],
['F', '0,617 12,615 30,560 40,460 47,385 57,290 68,235 80,222 90,255 108,300 120,370 130,415 157,447 180,425 200,435 225,418 245,437 262,445 290,490 310,495 325,507 340,487 352,485 365,430 380,405 393,365 418,366 430,430 440,480 458,515 472,535 485,450 497,400 515,310 537,265 555,315 575,370 590,440 605,480 628,502 648,460 668,425 680,365 695,315 708,310 733,280 755,325 775,350 798,400 820,445 840,480 862,505 888,508 902,527 925,475 945,445 967,400 990,405 1020,355 1045,265 1060,257 1085,295 1110,355 1138,400 1150,455 1175,535 1200,543 1215,470 1235,375 1250,323']]);

const cycle = join([
['B', '146,1378 158,1408 170,1350 180,1295 192,1268 203,1280 210,1190 218,1050 232,920 250,843 265,842 280,800 300,745 315,722 340,715 360,718 400,712 415,745 435,775 455,850 470,900 480,935 490,945 505,925 525,910 545,880 557,872 570,900 585,945 600,977 615,920 630,850 640,790 650,760 670,747 700,742 740,730 755,720 765,725 778,775 790,775 820,754 850,758 867,742 885,790 905,870 930,920 950,1000 965,1090 980,1160 990,1195 1005,1250 1020,1235 1040,1135 1060,1135 1082,1075 1095,1160 1110,1245 1122,1272 1132,1210 1145,1030 1160,910 1170,820 1185,810 1205,765 1222,785 1240,760 1265,730 1280,738 1300,750 1315,742 1333,758 1350,722 1370,710 1385,696 1395,710 1420,810 1440,890 1455,930 1467,957 1485,880 1510,840'],
['D', '15,278 28,305 50,368 65,385 85,430 102,478 120,490 140,550 160,490 175,540 190,620 210,740 235,840 250,882 275,852 295,918 305,920 318,892 330,930 345,1000 357,1005 370,1002 400,895 415,770 432,665 457,642 487,668 500,610 525,505 535,515 550,465 560,540 570,610 585,660 595,760 605,880 615,980 625,1018 640,975 657,960 675,895 697,912 712,830 740,790 755,700 770,645 785,690 800,710 815,698 835,742 848,728 857,660 878,595 892,638 910,595 935,575 950,660 970,730 990,840 1003,862 1022,840 1035,940 1055,1040 1068,1045 1080,960 1100,780 1120,670 1135,640 1155,655 1185,672 1198,670 1215,740 1242,788 1258,690 1275,580 1288,545 1300,600 1312,690 1330,695 1345,590 1360,500 1375,455 1390,560 1405,690 1417,740 1430,670 1445,500 1465,330 1478,290 1493,265 1510,330 1520,382'],
['F', '100,382 118,388 130,355 140,337 155,357 175,290 190,298 208,307 230,295 245,275 260,285 275,335 290,367 325,355 350,325 370,290 390,257 405,300 420,380 430,470 443,523 470,480 485,380 500,300 512,260 530,285 550,360 570,440 585,478 625,470 640,375 655,300 670,270 695,242 740,220 760,255 785,275 810,298 825,275 840,290 855,295 870,270 885,262 900,288 925,253 950,265 970,315 987,340 1010,288 1025,275 1045,240 1055,240 1065,257 1085,248 1110,240 1135,240 1150,340 1170,427 1185,405 1200,310 1220,260 1240,236 1250,240']]);

function at(series, x) {
  let i = 1;
  while (i < series.length - 1 && series[i][0] < x) i++;
  const [x0, y0] = series[i - 1], [x1, y1] = series[i];
  return y0 + (y1 - y0) * (x - x0) / (x1 - x0);
}
const path = p => 'M' + p.map(([x, y]) => x.toFixed(1) + ' ' + y.toFixed(1)).join('L');
// Resamples a series on the two-pixel bar spacing.
function bars(series) {
  const out = [];
  for (let x = Math.ceil(series[0][0]); x <= series[series.length - 1][0]; x += 2) out.push([x, at(series, x)]);
  return out;
}
const squares = (p, size) => p.map(([x, y]) => `M${Math.round(x) - size / 2} ${Math.round(y)}h${size}`).join('');

const plot = document.getElementById('plot');
const line = (d, stroke, extra) => add(plot, 'path', Object.assign({ d, stroke, fill: 'none', 'shape-rendering': 'crispEdges' }, extra));

for (let i = 0; i < 95; i++) {
  const x = 66.5 + i * 18;
  line(`M${x} 109V693M${x} 714V987`, '#585858', { 'stroke-dasharray': i % 2 ? '12 6 3 3' : '6 5 3 4 3 3' });
}
let arcs = '';
for (let x = 60; x < 1840; x += 90) {
  for (let t = 0; t < 90; t++) {
    const ring = v => 692 - 29 * Math.sqrt(Math.max(0, 1 - Math.pow(Math.abs(v - 45) / 45, 2)));
    if ((t > 7 && t < 10) || (t > 29 && t < 36) || (t > 53 && t < 60) || (t > 77 && t < 82)) continue;
    arcs += `M${x + t} ${ring(t).toFixed(1)}L${x + t + 1} ${ring(t + 1).toFixed(1)}`;
  }
}
line(arcs, '#007070');
line('M59 466.5H1774', '#0000ff');

let last = null;
for (const [block, color, s] of osc) {
  const p = pts(block, s);
  line(path(last ? [last, ...p] : p), color);
  last = p[p.length - 1];
}
line(path(slow), '#ffff00');
for (const [b, s] of support) line(squares(bars(pts(b, s)), 2), '#00ff00', { 'stroke-width': 2 });
for (const [b, s] of resistance) line(squares(bars(pts(b, s)), 2), '#ff0000', { 'stroke-width': 2 });
const ticks = bars(price).map(([x, y], i) => [x, y + [0, 2, -1, 1, -2, 1, 0, -1, 2, -2, 1][i * 7 % 11]]);
line(path(ticks), '#6666ff');
line(squares(ticks, 4), '#00ffff', { 'stroke-width': 4 });

line(path(cycle), OLIVE);
line('M62 769.5H1774M62 964.5H1774', '#0000ff', { 'stroke-dasharray': '4 3' });
line('M62 867.5H1774', '#ffff00', { 'stroke-dasharray': '3 3' });
let hist = '';
for (let x = 60; x < 1775; x += 2) hist += `M${x + .5} ${at(cci, x).toFixed(0)}V860`;
line(hist, '#484848');
line('M59 774.5H1774M59 944.5H1774', '#909090');
const c = bars(cci);
for (let i = 1; i < c.length; i++) {
  const y = c[i][1];
  line(path([c[i - 1], c[i]]), y < 773 ? RED : y > 943 ? '#00ffff' : '#b8b8b8');
}

// Axes: positions are percentages of the plot height, so labels follow the window.
const pct = y => ((y - 90) / 9).toFixed(3) + '%';
function drawAxis(id, lineX, tickA, tickB, labels, boxes, place) {
  const svg = document.getElementById(id);
  const attr = { stroke: '#fff', 'shape-rendering': 'crispEdges' };
  add(svg, 'line', { x1: lineX, x2: lineX, y1: 0, y2: '100%', ...attr });
  add(svg, 'line', { x1: id === 'left' ? 2 : 0, x2: id === 'left' ? 59 : 78, y1: pct(693.5), y2: pct(693.5), ...attr });
  for (const [y, text] of labels) {
    add(svg, 'line', { x1: tickA, x2: tickB, y1: pct(y + .5), y2: pct(y + .5), ...attr });
    if (text) add(svg, 'text', { x: place.x, y: pct(y), dy: 8, 'text-anchor': place.anchor }, text);
  }
  for (const [y, text, fill] of boxes) {
    add(svg, 'rect', { x: place.box, y: pct(y), width: place.width, height: 23, fill });
    add(svg, 'text', { x: place.x, y: pct(y), dy: 19, 'text-anchor': place.anchor, class: 'onbox' }, text);
  }
}
drawAxis('left', 58.5, 51, 58,
  [[167, '33...'], [252, '32...'], [337, '31...'], [421, '30...'], [506, '29...'], [591, '28...'], [676], [704, '1.00'], [737], [770], [802], [834, '0.20'], [867], [899, '-0....'], [931]],
  [[711, '0.91', OLIVE], [760, '0.60', '#0000ff'], [955, '-0.60', '#0000ff']],
  { x: 48, anchor: 'end', box: 2, width: 56 });
drawAxis('right', .5, 1, 6,
  [[167, '33000'], [252, '32000'], [337, '31000'], [421, '30000'], [506, '29000'], [591, '28000'], [676], [718, '200.00'], [789, '100.00'], [824, '50.00'], [859, '0.00'], [895, '-50.00'], [930, '-100.00'], [965, '-150.00']],
  [[120, '33440', '#6666ff'], [173, '32826', '#00ff00'], [738, '158.31', '#ff0000'], [765, '120.00', '#808080'], [935, '-120.00', '#808080']],
  { x: 7, anchor: 'start', box: 1, width: 77 });
add(document.getElementById('left'), 'rect', { x: 0, y: 0, width: 2, height: '100%', fill: '#909090' });
add(document.getElementById('right'), 'rect', { x: 78, y: 0, width: 2, height: '100%', fill: '#e8e8e8' });

const dates = document.getElementById('dates');
const px = x => (x / 19.2).toFixed(3) + '%';
const white = { stroke: '#fff', 'shape-rendering': 'crispEdges' };
add(dates, 'line', { x1: 2, x2: px(1918), y1: .5, y2: .5, ...white });
add(dates, 'line', { x1: px(94.5), x2: px(94.5), y1: 0, y2: 5, ...white });
const days = ['11/01', '11/06', '11/10', '11/15', '11/21', '11/27', '12/01', '12/07', '12/12', '12/18', '12/22', '1/02', '1/05', '1/11', '1/17', '1/23', '1/29', '2/01', '2/07', '2/13', '2/19', '2/22', '2/28', '3/05', '3/11', ''];
days.forEach((d, i) => {
  const x = i ? 94.5 + 68 * i : 102.5;
  add(dates, 'line', { x1: px(x), x2: px(x), y1: 0, y2: i ? 5 : 10, ...white });
  if (d) add(dates, 'text', { x: px(x + 26), y: 24, 'text-anchor': 'middle' }, d);
});
add(dates, 'rect', { x: 0, y: 0, width: 2, height: 28, fill: '#909090' });

// Slanted tab edges.
function edge(tab, rising, atEnd) {
  const svg = document.createElementNS(NS, 'svg');
  svg.setAttribute('viewBox', '0 0 6 17');
  add(svg, 'path', { d: rising ? 'M1 17L5 0' : 'M1 0L5 17', stroke: '#000', fill: 'none' });
  if (atEnd) tab.append(svg); else tab.prepend(svg);
}
document.querySelectorAll('.tab').forEach(tab => {
  edge(tab, tab.classList.contains('after'), false);
  if (tab.classList.contains('last')) edge(tab, true, true);
});
```
